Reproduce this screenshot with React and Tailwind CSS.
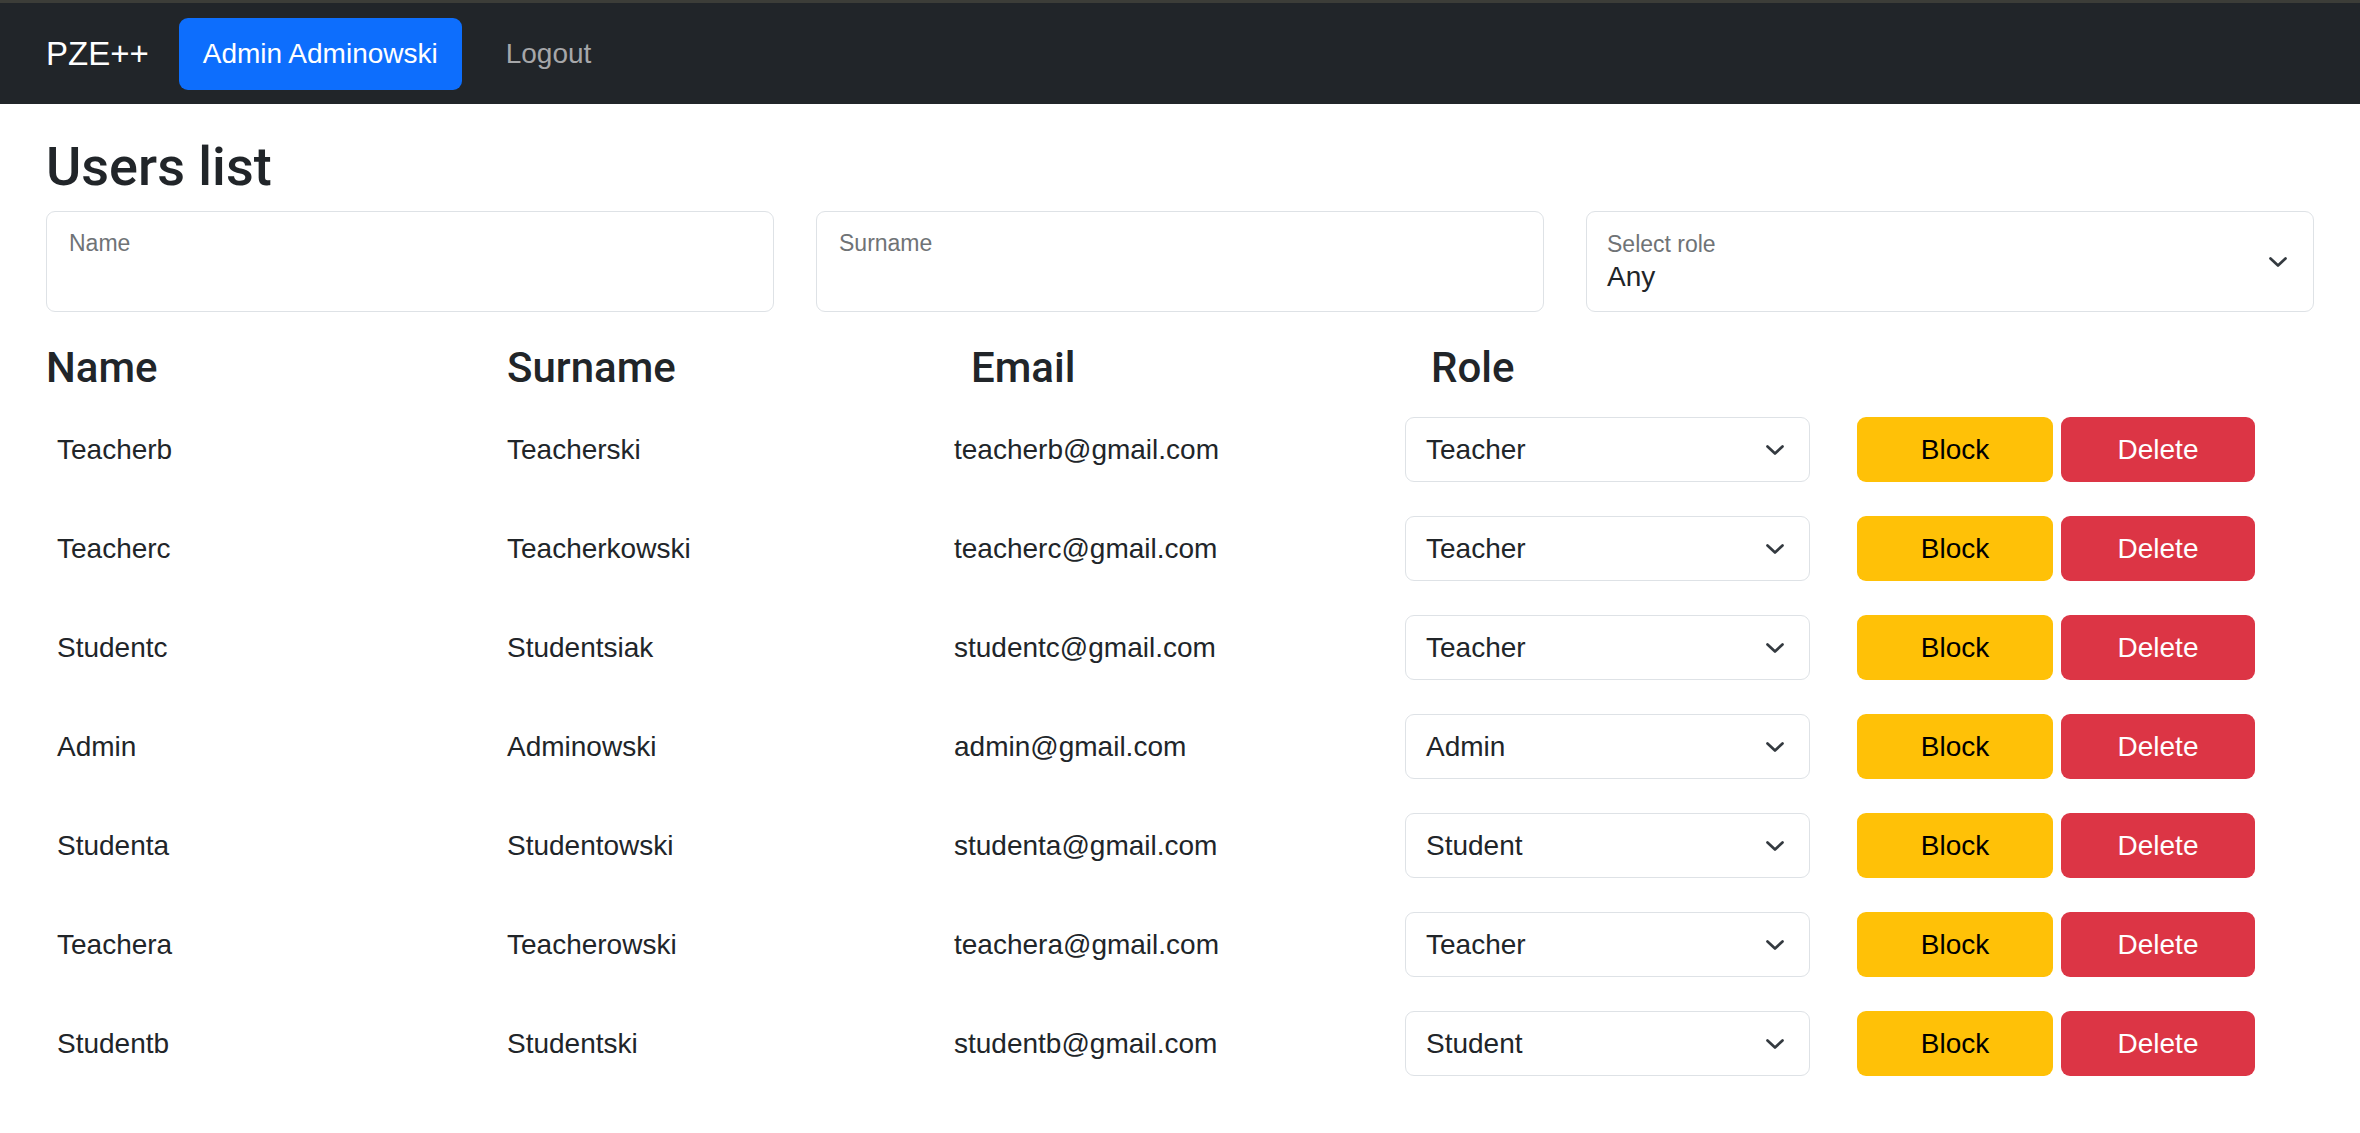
import React from "react";

const users = [
  { name: "Teacherb", surname: "Teacherski", email: "teacherb@gmail.com", role: "Teacher" },
  { name: "Teacherc", surname: "Teacherkowski", email: "teacherc@gmail.com", role: "Teacher" },
  { name: "Studentc", surname: "Studentsiak", email: "studentc@gmail.com", role: "Teacher" },
  { name: "Admin", surname: "Adminowski", email: "admin@gmail.com", role: "Admin" },
  { name: "Studenta", surname: "Studentowski", email: "studenta@gmail.com", role: "Student" },
  { name: "Teachera", surname: "Teacherowski", email: "teachera@gmail.com", role: "Teacher" },
  { name: "Studentb", surname: "Studentski", email: "studentb@gmail.com", role: "Student" },
];

const Chevron = () => (
  <svg width="18" height="10" viewBox="0 0 18 10" fill="none">
    <path d="M1.5 1.5 L9 8.5 L16.5 1.5" stroke="#343a40" strokeWidth="2.7" strokeLinecap="round" strokeLinejoin="round" />
  </svg>
);

const FilterInput = ({ label }) => (
  <div className="h-[101px] border border-[#dee2e6] rounded-[9px] bg-white pl-[22px] pt-[17px]">
    <div className="text-[23px] leading-[28px] text-[#6f7376]">{label}</div>
  </div>
);

const App = () => {
  return (
    <div className="min-h-[1133px] bg-white text-[#212529] font-['Liberation_Sans',Arial,sans-serif]">
      <div className="h-[3px] bg-[#3c3d38]" />

      {/* Navbar */}
      <nav className="h-[101px] bg-[#212529] flex items-center px-[46px]">
        <span className="text-[33px] text-white leading-none">PZE++</span>
        <div className="ml-[30px] h-[72px] px-[24px] rounded-[9px] bg-[#0d6efd] text-white text-[28px] flex items-center">
          Admin Adminowski
        </div>
        <span className="ml-[44px] text-[28px] text-[#a6a7a9]">Logout</span>
      </nav>

      <main className="px-[46px]">
        <h1 className="mt-[30px] text-[54px] leading-[66px] font-medium font-['Roboto',sans-serif]">Users list</h1>

        {/* Filters */}
        <div className="mt-[11px] grid grid-cols-3 gap-[42px]">
          <FilterInput label="Name" />
          <FilterInput label="Surname" />
          <div className="h-[101px] border border-[#dee2e6] rounded-[9px] bg-white pl-[20px] pr-[26px] flex items-center justify-between">
            <div className="pt-[1px]">
              <div className="text-[23px] leading-[28px] text-[#6f7376]">Select role</div>
              <div className="mt-[2px] text-[28px] leading-[34px]">Any</div>
            </div>
            <Chevron />
          </div>
        </div>

        {/* Table header */}
        <div className="mt-[31px] grid grid-cols-[461px_464px_460px_1fr] text-[42px] leading-[49px] font-medium font-['Roboto',sans-serif]">
          <div>Name</div>
          <div>Surname</div>
          <div>Email</div>
          <div>Role</div>
        </div>

        {/* Rows */}
        <div className="mt-[8px]">
          {users.map((u) => (
            <div
              key={u.email}
              className="h-[99px] pl-[11px] grid grid-cols-[450px_447px_451px_405px_1fr] items-center text-[28px]"
            >
              <div>{u.name}</div>
              <div>{u.surname}</div>
              <div>{u.email}</div>
              <div className="h-[65px] border border-[#dee2e6] rounded-[9px] pl-[20px] pr-[25px] flex items-center justify-between">
                <span>{u.role}</span>
                <Chevron />
              </div>
              <div className="pl-[47px] flex gap-[8px]">
                <button className="w-[196px] h-[65px] rounded-[9px] bg-[#ffc107] text-black text-[28px]">Block</button>
                <button className="w-[194px] h-[65px] rounded-[9px] bg-[#dc3545] text-white text-[28px]">Delete</button>
              </div>
            </div>
          ))}
        </div>
      </main>
    </div>
  );
};

export default App;
